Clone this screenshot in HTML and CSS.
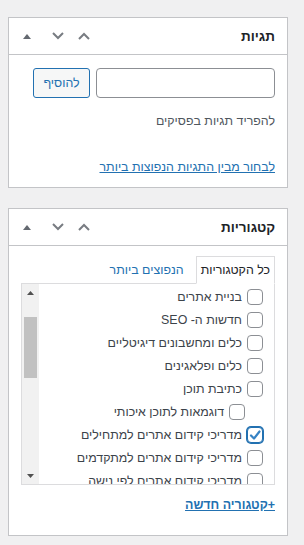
FILE: index.html
```html
<!DOCTYPE html>
<html lang="he" dir="rtl">
<head>
    <meta charset="UTF-8">
    <meta name="viewport" content="width=device-width, initial-scale=1.0">
    <title>תגיות וקטגוריות</title>
    <link rel="stylesheet" href="styles.css">
</head>
<body>
    <div class="sidebar">
        <!-- תגיות -->
        <div class="postbox">
            <div class="postbox-header">
                <h2 class="hndle">תגיות</h2>
                <div class="handle-actions">
                    <span class="handle-btn order">
                        <svg width="12" height="8" viewBox="0 0 12 8"><polyline points="1,7 6,2 11,7" fill="none" stroke="#787c82" stroke-width="2"/></svg>
                    </span>
                    <span class="handle-btn order">
                        <svg width="12" height="8" viewBox="0 0 12 8"><polyline points="1,1 6,6 11,1" fill="none" stroke="#787c82" stroke-width="2"/></svg>
                    </span>
                    <span class="handle-btn toggle">
                        <svg width="8" height="5" viewBox="0 0 8 5"><polygon points="0,5 4,0 8,5" fill="#646970"/></svg>
                    </span>
                </div>
            </div>
            <div class="inside tags-inside">
                <div class="ajaxtag">
                    <input type="text" class="newtag">
                    <button type="button" class="button">להוסיף</button>
                </div>
                <p class="howto">להפריד תגיות בפסיקים</p>
                <a href="#" class="tagcloud-link">לבחור מבין התגיות הנפוצות ביותר</a>
            </div>
        </div>

        <!-- קטגוריות -->
        <div class="postbox">
            <div class="postbox-header">
                <h2 class="hndle">קטגוריות</h2>
                <div class="handle-actions">
                    <span class="handle-btn order">
                        <svg width="12" height="8" viewBox="0 0 12 8"><polyline points="1,7 6,2 11,7" fill="none" stroke="#787c82" stroke-width="2"/></svg>
                    </span>
                    <span class="handle-btn order">
                        <svg width="12" height="8" viewBox="0 0 12 8"><polyline points="1,1 6,6 11,1" fill="none" stroke="#787c82" stroke-width="2"/></svg>
                    </span>
                    <span class="handle-btn toggle">
                        <svg width="8" height="5" viewBox="0 0 8 5"><polygon points="0,5 4,0 8,5" fill="#646970"/></svg>
                    </span>
                </div>
            </div>
            <div class="inside cat-inside">
                <ul class="category-tabs">
                    <li class="tab active">כל הקטגוריות</li>
                    <li class="tab"><a href="#">הנפוצים ביותר</a></li>
                </ul>
                <div class="tabs-panel">
                    <ul class="categorychecklist">
                        <li><span class="cb"></span>בניית אתרים</li>
                        <li><span class="cb"></span>חדשות ה- SEO</li>
                        <li><span class="cb"></span>כלים ומחשבונים דיגיטליים</li>
                        <li><span class="cb"></span>כלים ופלאגינים</li>
                        <li><span class="cb"></span>כתיבת תוכן</li>
                        <li class="child"><span class="cb"></span>דוגמאות לתוכן איכותי</li>
                        <li><span class="cb checked"><svg width="14" height="14" viewBox="0 0 14 14"><polyline points="3,7.5 6,10.5 11.5,3.5" fill="none" stroke="#3582c4" stroke-width="2.2" stroke-linecap="round" stroke-linejoin="round"/></svg></span>מדריכי קידום אתרים למתחילים</li>
                        <li><span class="cb"></span>מדריכי קידום אתרים למתקדמים</li>
                        <li><span class="cb"></span>מדריכי קידום אתרים לפי נישה</li>
                    </ul>
                    <div class="fake-scroll">
                        <span class="arrow">
                            <svg width="7" height="4" viewBox="0 0 7 4"><polygon points="0,4 3.5,0 7,4" fill="#505050"/></svg>
                        </span>
                        <div class="track"><div class="thumb"></div></div>
                        <span class="arrow">
                            <svg width="7" height="4" viewBox="0 0 7 4"><polygon points="0,0 3.5,4 7,0" fill="#505050"/></svg>
                        </span>
                    </div>
                </div>
                <a href="#" class="add-cat">+קטגוריה חדשה</a>
            </div>
        </div>
    </div>
</body>
</html>
```

FILE: styles.css
```css
body { margin: 0; background: #f0f0f1; font-family: "Liberation Sans", Arial, sans-serif; font-size: 12.4px; color: #3c434a; }
.sidebar { padding: 17px 16px 10px 8px; }
.postbox { background: #fff; border: 1px solid #c3c4c7; margin-bottom: 20px; }
.postbox-header { display: flex; align-items: center; justify-content: space-between; height: 36px; border-bottom: 1px solid #c3c4c7; }
.hndle { margin: 0; padding: 0 12px; font-size: 13.5px; font-weight: bold; color: #1d2327; }
.handle-actions { display: flex; height: 36px; }
.handle-btn { display: flex; align-items: center; justify-content: center; height: 36px; }
.handle-btn.order { width: 26px; }
.handle-btn.toggle { width: 36px; }

.inside { padding: 0 12px; }
.tags-inside { padding-top: 13px; padding-bottom: 11px; }
.ajaxtag { display: flex; gap: 6px; }
.newtag { width: 179px; height: 30px; box-sizing: border-box; border: 1px solid #8c8f94; border-radius: 4px; margin: 0; }
.button { height: 30px; width: 57px; padding: 0; border: 1px solid #2271b1; border-radius: 3px; background: #f6f7f7; color: #2271b1; font-family: inherit; font-size: 12.4px; }
.howto { margin: 14px 0 0; line-height: 18px; color: #50575e; }
.tagcloud-link { display: block; margin-top: 28px; line-height: 18px; color: #2271b1; }
a { color: #2271b1; }

.cat-inside { padding-top: 10px; padding-bottom: 21px; }
.category-tabs { list-style: none; margin: 0; padding: 0; display: flex; gap: 8px; align-items: center; }
.tab { line-height: 26px; height: 26px; padding: 0 4px; }
.tab a { text-decoration: none; }
.tab.active { border: 1px solid #dcdcde; border-bottom: 1px solid #fff; margin-bottom: -1px; color: #1d2327; position: relative; background: #fff; }
.tabs-panel { display: flex; height: 200px; border: 1px solid #dcdcde; overflow: hidden; }
.categorychecklist { flex: 1; list-style: none; margin: 0; padding: 1px 11px 0 0; }
.categorychecklist li { display: flex; align-items: center; height: 23px; gap: 5px; white-space: nowrap; }
.categorychecklist li.child { padding-right: 18px; }
.cb { display: inline-flex; align-items: center; justify-content: center; width: 16px; height: 16px; box-sizing: border-box; border: 1px solid #8c8f94; border-radius: 4px; background: #fff; flex: none; }
.cb.checked { border-color: #2271b1; box-shadow: 0 0 0 1px #2271b1; }
.fake-scroll { width: 17px; display: flex; flex-direction: column; background: #f1f1f1; }
.arrow { height: 17px; display: flex; align-items: center; justify-content: center; }
.track { flex: 1; padding: 16px 2px 0; }
.thumb { height: 61px; background: #c1c1c1; }
.add-cat { display: block; margin-top: 11px; line-height: 18px; font-weight: bold; }
```
